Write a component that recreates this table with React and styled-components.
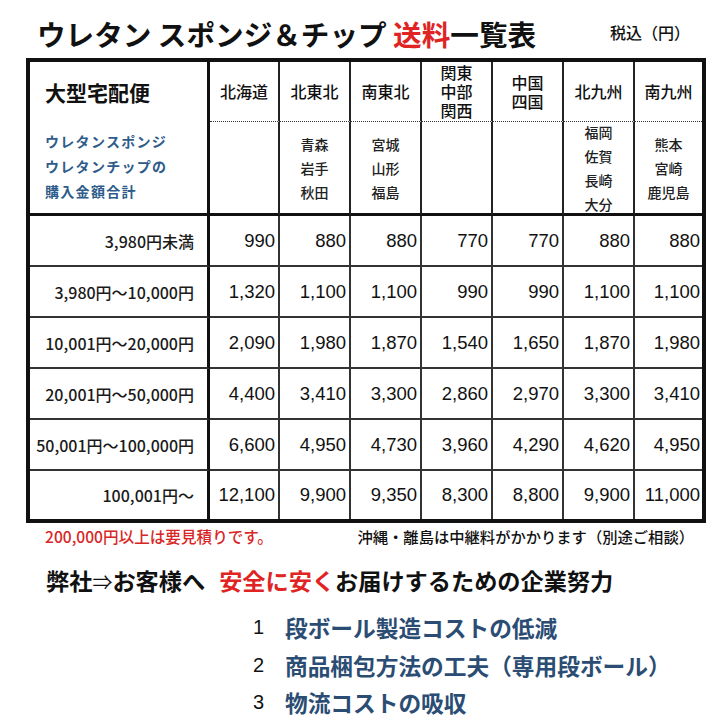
import React from "react";
import styled, { createGlobalStyle } from "styled-components";

const GlobalStyle = createGlobalStyle`
  html, body { margin: 0; padding: 0; background: #fff; }
  body { font-family: "Noto Sans CJK JP", "Noto Sans", sans-serif; color: #111; }
`;

const Page = styled.div`
  width: 728px;
  height: 728px;
  overflow: hidden;
  background: #fff;
`;

const TitleBar = styled.header`
  display: flex;
  align-items: center;
  justify-content: space-between;
  height: 58px;
  box-sizing: border-box;
  padding: 10px 38px 0 37px;
`;

const Title = styled.h1`
  margin: 0;
  font-size: 28.6px;
  font-weight: 700;
  line-height: 1;
  color: #111;
`;

const Red = styled.span`
  color: #e02424;
`;

const TaxNote = styled.span`
  font-size: 16px;
  font-weight: 500;
  color: #111;
  margin-top: -4px;
`;

const Grid = styled.div`
  margin-left: 26px;
  width: 680px;
  box-sizing: border-box;
  border: 4px solid #111;
  display: grid;
  grid-template-columns: 180px 70px repeat(5, 71px) 1fr;
  grid-template-rows: 60px 94px repeat(5, 51px) 48px;
`;

const Corner = styled.div`
  grid-row: 1 / span 2;
  grid-column: 1;
  display: grid;
  grid-template-rows: 60px 1fr;
  border-right: 3px solid #111;
  border-bottom: 3px solid #111;
  padding-left: 15px;
`;

const CornerTitle = styled.div`
  display: flex;
  align-items: center;
  font-size: 21px;
  font-weight: 700;
  color: #111;
`;

const CornerSub = styled.div`
  display: flex;
  flex-direction: column;
  justify-content: center;
  font-size: 14px;
  font-weight: 700;
  letter-spacing: 1.3px;
  line-height: 25px;
  color: #2e5c8a;
  padding-bottom: 2px;
`;

const RegionCell = styled.div`
  display: flex;
  flex-direction: column;
  align-items: center;
  justify-content: center;
  font-size: 16px;
  font-weight: 500;
  line-height: 19px;
  color: #111;
  border-right: ${(p) => (p.$last ? "none" : "2px solid #222")};
  border-bottom: 1px dotted #333;
`;

const PrefCell = styled.div`
  display: flex;
  flex-direction: column;
  align-items: center;
  justify-content: center;
  font-size: 14px;
  font-weight: 500;
  line-height: 24px;
  color: #222;
  border-right: ${(p) => (p.$last ? "none" : "2px solid #222")};
  border-bottom: 3px solid #111;
`;

const RowLabel = styled.div`
  display: flex;
  align-items: center;
  justify-content: flex-end;
  padding-right: 13px;
  font-size: 16px;
  font-weight: 500;
  color: #1a1a1a;
  border-right: 3px solid #111;
  border-bottom: ${(p) => (p.$lastRow ? "none" : "2px solid #333")};
`;

const Price = styled.div`
  display: flex;
  align-items: center;
  justify-content: flex-end;
  padding-right: ${(p) => (p.$last ? "2px" : "3px")};
  font-family: "Liberation Sans", Arial, sans-serif;
  font-size: 18.5px;
  color: #111;
  border-right: ${(p) => (p.$last ? "none" : "2px solid #333")};
  border-bottom: ${(p) => (p.$lastRow ? "none" : "2px solid #333")};
`;

const Notes = styled.div`
  display: flex;
  align-items: center;
  justify-content: space-between;
  height: 26px;
  padding: 0 34px 0 45px;
`;

const NoteRed = styled.span`
  font-size: 15.6px;
  font-weight: 500;
  color: #d82626;
`;

const Note = styled.span`
  font-size: 15.3px;
  font-weight: 500;
  color: #111;
`;

const Heading = styled.h2`
  margin: 18px 0 0 46px;
  font-size: 23.2px;
  font-weight: 700;
  line-height: 26px;
  color: #111;
`;

const Arrow = styled.span`
  font-weight: 400;
  font-size: 20px;
`;

const Gap = styled.span`
  display: inline-block;
  width: 14px;
`;

const List = styled.ol`
  list-style: none;
  margin: 14px 0 0 0;
  padding: 0 0 0 250px;
`;

const Item = styled.li`
  display: flex;
  align-items: center;
  height: 37.5px;
`;

const Num = styled.span`
  width: 35px;
  font-family: "Liberation Sans", Arial, sans-serif;
  font-size: 20px;
  color: #111;
  padding-left: 3px;
  box-sizing: border-box;
`;

const ItemText = styled.span`
  font-size: 22.7px;
  font-weight: 700;
  color: #2b4d74;
`;

const regions = [
  { name: ["北海道"], prefs: [] },
  { name: ["北東北"], prefs: ["青森", "岩手", "秋田"] },
  { name: ["南東北"], prefs: ["宮城", "山形", "福島"] },
  { name: ["関東", "中部", "関西"], prefs: [] },
  { name: ["中国", "四国"], prefs: [] },
  { name: ["北九州"], prefs: ["福岡", "佐賀", "長崎", "大分"] },
  { name: ["南九州"], prefs: ["熊本", "宮崎", "鹿児島"] },
];

const rows = [
  ["3,980円未満", ["990", "880", "880", "770", "770", "880", "880"]],
  ["3,980円～10,000円", ["1,320", "1,100", "1,100", "990", "990", "1,100", "1,100"]],
  ["10,001円～20,000円", ["2,090", "1,980", "1,870", "1,540", "1,650", "1,870", "1,980"]],
  ["20,001円～50,000円", ["4,400", "3,410", "3,300", "2,860", "2,970", "3,300", "3,410"]],
  ["50,001円～100,000円", ["6,600", "4,950", "4,730", "3,960", "4,290", "4,620", "4,950"]],
  ["100,001円～", ["12,100", "9,900", "9,350", "8,300", "8,800", "9,900", "11,000"]],
];

const efforts = [
  "段ボール製造コストの低減",
  "商品梱包方法の工夫（専用段ボール）",
  "物流コストの吸収",
];

export default function App() {
  return (
    <Page>
      <GlobalStyle />
      <TitleBar>
        <Title>
          ウレタン スポンジ＆チップ <Red>送料</Red>一覧表
        </Title>
        <TaxNote>税込（円）</TaxNote>
      </TitleBar>

      <Grid>
        <Corner>
          <CornerTitle>大型宅配便</CornerTitle>
          <CornerSub>
            <span>ウレタンスポンジ</span>
            <span>ウレタンチップの</span>
            <span>購入金額合計</span>
          </CornerSub>
        </Corner>
        {regions.map((r, i) => (
          <RegionCell key={"r" + i} $last={i === regions.length - 1} style={{ gridRow: 1, gridColumn: i + 2 }}>
            {r.name.map((n) => (
              <span key={n}>{n}</span>
            ))}
          </RegionCell>
        ))}
        {regions.map((r, i) => (
          <PrefCell key={"p" + i} $last={i === regions.length - 1} style={{ gridRow: 2, gridColumn: i + 2 }}>
            {r.prefs.map((n) => (
              <span key={n}>{n}</span>
            ))}
          </PrefCell>
        ))}
        {rows.map(([label, prices], ri) => {
          const lastRow = ri === rows.length - 1;
          return (
            <React.Fragment key={label}>
              <RowLabel $lastRow={lastRow}>{label}</RowLabel>
              {prices.map((p, ci) => (
                <Price key={ci} $last={ci === prices.length - 1} $lastRow={lastRow}>
                  {p}
                </Price>
              ))}
            </React.Fragment>
          );
        })}
      </Grid>

      <Notes>
        <NoteRed>200,000円以上は要見積りです。</NoteRed>
        <Note>沖縄・離島は中継料がかかります（別途ご相談）</Note>
      </Notes>

      <Heading>
        弊社<Arrow>⇒</Arrow>お客様へ<Gap />
        <Red>安全に安く</Red>お届けするための企業努力
      </Heading>

      <List>
        {efforts.map((e, i) => (
          <Item key={e}>
            <Num>{i + 1}</Num>
            <ItemText>{e}</ItemText>
          </Item>
        ))}
      </List>
    </Page>
  );
}
